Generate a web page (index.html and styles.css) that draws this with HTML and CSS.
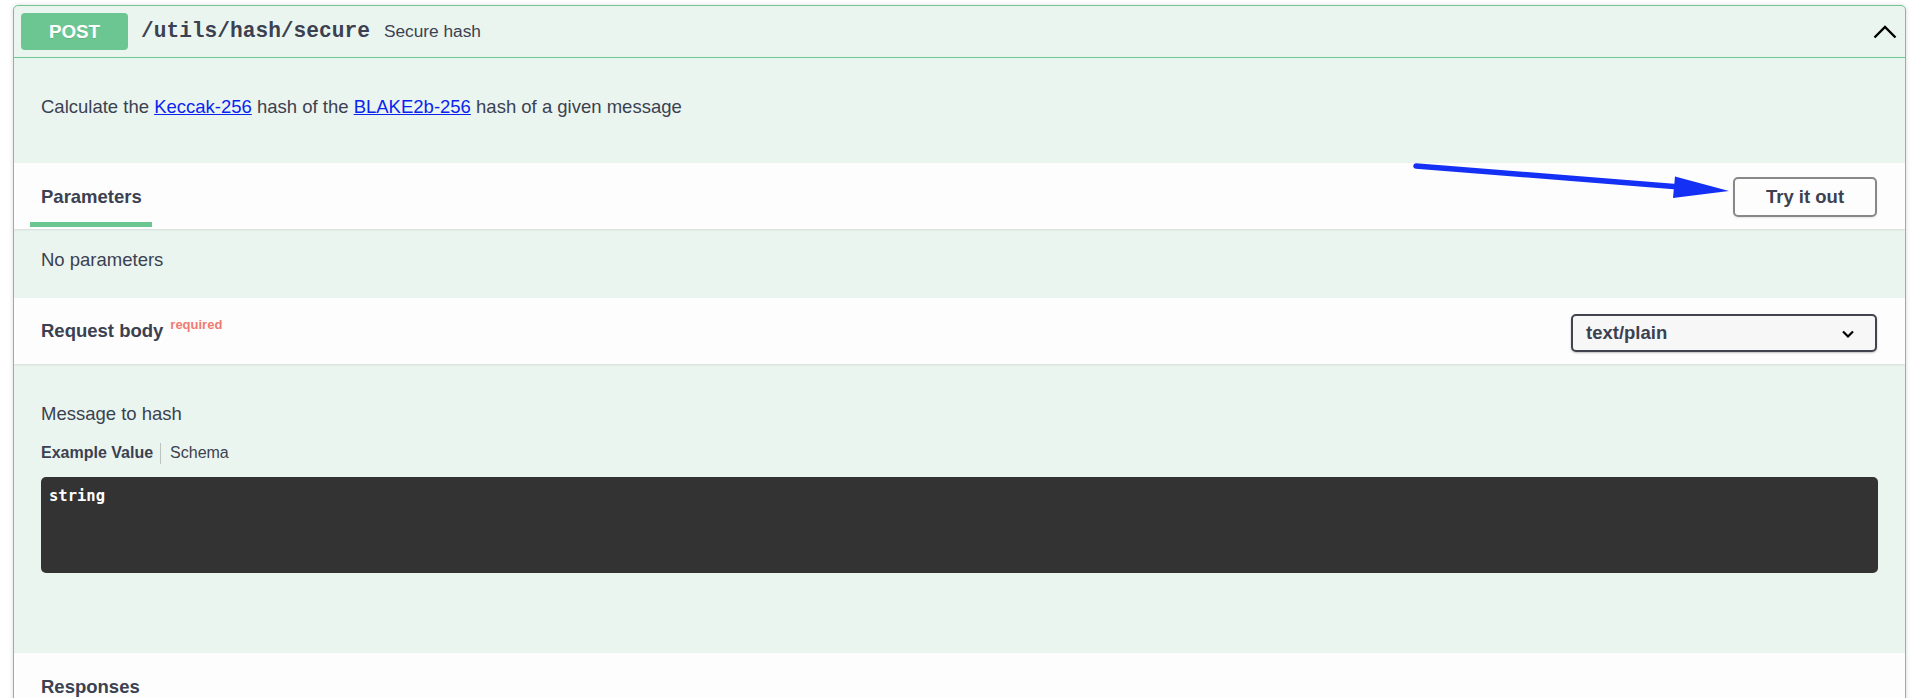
FILE: index.html
```html
<!DOCTYPE html>
<html lang="en">
<head>
<meta charset="utf-8">
<title>POST /utils/hash/secure</title>
<link rel="stylesheet" href="styles.css">
</head>
<body>
<div class="page">
  <div class="opblock">
    <div class="summary">
      <span class="method">POST</span>
      <span class="path">/utils/hash/secure</span>
      <span class="summary-desc">Secure hash</span>
      <svg class="collapse" width="24" height="16" viewBox="0 0 24 16"><polyline points="1.5,13.5 12,3 22.5,13.5" fill="none" stroke="#000" stroke-width="2.4"/></svg>
    </div>
    <div class="description">
      <p>Calculate the <a href="#">Keccak-256</a> hash of the <a href="#">BLAKE2b-256</a> hash of a given message</p>
    </div>
    <div class="section-header">
      <div class="tab-item">Parameters</div>
      <button class="btn">Try it out</button>
    </div>
    <div class="section-body params-body">
      <p>No parameters</p>
    </div>
    <div class="section-header">
      <h4 class="req-title">Request body<span class="required">required</span></h4>
      <div class="select">
        <span>text/plain</span>
        <svg width="14" height="10" viewBox="0 0 14 10"><polyline points="2,2.5 7,7.5 12,2.5" fill="none" stroke="#000" stroke-width="2.2"/></svg>
      </div>
    </div>
    <div class="section-body request-body">
      <p class="body-desc">Message to hash</p>
      <div class="tabs">
        <span class="tab active">Example Value</span>
        <span class="tab-sep"></span>
        <span class="tab">Schema</span>
      </div>
      <pre class="code">string</pre>
    </div>
    <div class="section-header">
      <h4 class="plain-title">Responses</h4>
    </div>
  </div>
  <svg class="annotation" width="1914" height="698" viewBox="0 0 1914 698">
    <line x1="1416" y1="166" x2="1680" y2="187" stroke="#1530f5" stroke-width="5.5" stroke-linecap="round"/>
    <polygon points="1675,176.5 1729,191 1673,198" fill="#1530f5"/>
  </svg>
</div>
</body>
</html>
```
FILE: styles.css
```css
* { box-sizing: border-box; }
html, body { margin: 0; padding: 0; background: #ffffff; }
body {
  font-family: "Liberation Sans", Arial, Helvetica, sans-serif;
  color: #3b4151;
  font-size: 18.5px;
  line-height: 21px;
  overflow: hidden;
}
.page {
  position: relative;
  padding: 5px 8px 0 13px;
}
.opblock {
  border: 1px solid #6fc893;
  border-radius: 5px;
  background: #ebf5ef;
  box-shadow: 0 0 4px rgba(0, 0, 0, 0.16);
  overflow: hidden;
}
.summary {
  display: flex;
  align-items: center;
  padding: 7px 8px 7px 7px;
  border-bottom: 1px solid #6fc893;
  height: 52px;
}
.method {
  display: inline-block;
  min-width: 107px;
  height: 37px;
  line-height: 37px;
  text-align: center;
  background: #6cc691;
  color: #ffffff;
  font-weight: 700;
  font-size: 18.8px;
  border-radius: 4px;
  text-shadow: 0 1px 0 rgba(0, 0, 0, 0.1);
}
.path {
  font-family: "Liberation Mono", "Courier New", monospace;
  font-weight: 700;
  font-size: 21.2px;
  padding: 0 14px 0 13px;
  color: #3b4151;
}
.summary-desc {
  font-size: 17.3px;
  flex: 1;
  color: #3b4151;
}
.collapse { display: block; margin-top: 1px; }
.description {
  padding: 38px 27px 46px;
}
.description p { margin: 0; }
.description a { color: #0a24f0; text-decoration: underline; }
.section-header {
  height: 66px;
  display: flex;
  align-items: center;
  justify-content: space-between;
  padding: 0 28px 0 27px;
  background: rgba(255, 255, 255, 0.82);
  box-shadow: 0 1px 2px rgba(0, 0, 0, 0.1);
  position: relative;
}
.tab-item {
  align-self: flex-end;
  margin: 0 0 2px -11px;
  padding: 0 10px 15px 11px;
  border-bottom: 5px solid #6cc691;
  font-weight: 700;
}
.btn {
  font-family: inherit;
  font-size: 18.5px;
  font-weight: 700;
  color: #3b4151;
  background: transparent;
  border: 2.5px solid #888888;
  border-radius: 5px;
  box-shadow: 0 1px 2px rgba(0, 0, 0, 0.1);
  width: 144px;
  height: 40px;
  padding: 0;
  margin-top: 1px;
}
.section-body p { margin: 0; }
.params-body {
  padding: 20px 27px 28px;
}
h4 { margin: 0; font-size: 18.5px; font-weight: 700; }
.req-title { margin-top: 1px; }
.required {
  color: #f07b72;
  font-size: 13px;
  font-weight: 700;
  position: relative;
  top: -8px;
  padding-left: 7px;
}
.select {
  width: 306px;
  height: 38px;
  margin-top: 3px;
  display: flex;
  align-items: center;
  justify-content: space-between;
  padding: 0 20px 0 13px;
  background: #f7f7f7;
  border: 2.5px solid #41444e;
  border-radius: 5px;
  box-shadow: 0 1px 2px rgba(0, 0, 0, 0.25);
  font-weight: 700;
}
.select svg { display: block; margin-top: 2px; }
.request-body {
  padding: 39px 27px 80px;
}
.body-desc { margin: 0; }
.tabs {
  display: flex;
  align-items: center;
  margin-top: 19px;
  height: 20px;
  font-size: 16px;
  line-height: 20px;
}
.tab.active { font-weight: 700; }
.tab-sep {
  width: 1px;
  height: 21px;
  background: rgba(0, 0, 0, 0.2);
  margin: 0 9px 0 7px;
}
.code {
  margin: 14px 0 0;
  height: 96px;
  background: #333333;
  color: #ffffff;
  border-radius: 5px;
  padding: 9px 8px;
  font-family: "DejaVu Sans Mono", "Liberation Mono", monospace;
  font-weight: 700;
  font-size: 15.5px;
  line-height: 21px;
}
.plain-title { margin-top: 1px; }
.annotation {
  position: absolute;
  left: 0;
  top: 0;
  pointer-events: none;
}
```
